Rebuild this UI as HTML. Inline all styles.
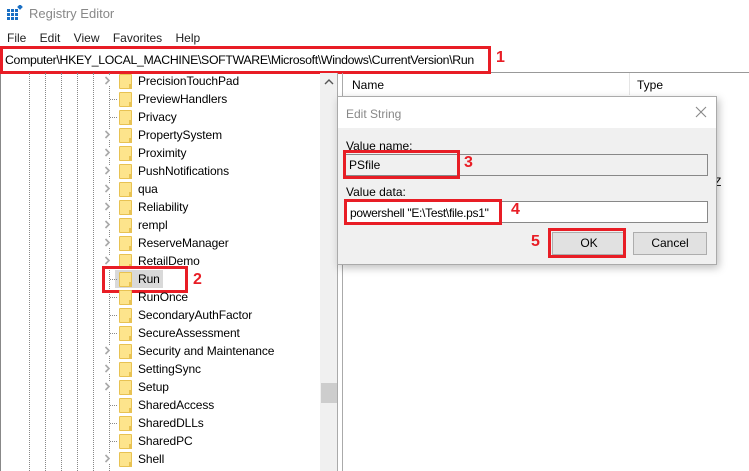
<!DOCTYPE html><html><head><style>
*{margin:0;padding:0;box-sizing:border-box}
body{width:749px;height:471px;overflow:hidden;background:#fff;font-family:"Liberation Sans",sans-serif;font-size:12px;color:#000;position:relative}
.a{position:absolute}
.row{position:absolute;left:0;height:18px;width:320px}
.fd{position:absolute;left:119px;top:2px;width:13px;height:15px;background:#fde48c;border:1px solid #e8c252;border-radius:1px}
.fd:after{content:"";position:absolute;right:-1px;bottom:-1px;width:3px;height:5px;background:#e8c252}
.tx{position:absolute;left:138px;top:2px;font-size:12px;letter-spacing:-.1px}
.ch{position:absolute;left:104px;top:4px;background:#fff}
.dt{position:absolute;left:110px;top:9px;width:7px;border-top:1px dotted #888}
.vl{position:absolute;top:73px;bottom:0;border-left:1px dotted #888}
.red{position:absolute;border:3px solid #e81d25}
.num{position:absolute;color:#e81d25;font-weight:bold;font-size:16px}
</style></head><body>
<svg class="a" style="left:7px;top:5px" width="16" height="16"><g fill="#1a6fc4"><rect x="0" y="4" width="3" height="3"/><rect x="4" y="4" width="3" height="3"/><rect x="8" y="4" width="3" height="3"/><rect x="0" y="8" width="3" height="3"/><rect x="4" y="8" width="3" height="3"/><rect x="8" y="8" width="3" height="3"/><rect x="0" y="12" width="3" height="3"/><rect x="4" y="12" width="3" height="3"/><rect x="8" y="12" width="3" height="3"/><rect x="11" y="0" width="4" height="4" transform="rotate(45 13 2)"/></g></svg>
<div class="a" style="left:29px;top:6px;font-size:13px;color:#888">Registry Editor</div>
<div class="a" style="left:7px;top:31px;font-size:12px;color:#222;word-spacing:0">File&nbsp;&nbsp;&nbsp; Edit&nbsp;&nbsp;&nbsp; View&nbsp;&nbsp;&nbsp; Favorites&nbsp;&nbsp;&nbsp; Help</div>
<div class="a" style="left:0;top:72px;width:749px;border-top:1px solid #999"></div>
<div class="a" style="left:0;top:73px;width:1px;height:398px;background:#888"></div>
<div class="a" style="left:5px;top:53px;font-size:12.3px;letter-spacing:-.32px">Computer\HKEY_LOCAL_MACHINE\SOFTWARE\Microsoft\Windows\CurrentVersion\Run</div>
<div class="red" style="left:0;top:46px;width:491px;height:28px"></div>
<div class="num" style="left:496px;top:49px">1</div>
<div class="vl" style="left:29px"></div><div class="vl" style="left:45px"></div><div class="vl" style="left:61px"></div><div class="vl" style="left:77px"></div><div class="vl" style="left:93px"></div><div class="vl" style="left:109px"></div>
<svg width="0" height="0" style="position:absolute"><defs><g id="c"><path d="M1.5 1 L5 4.5 L1.5 8" fill="none" stroke="#a8a8a8" stroke-width="1.6"/></g></defs></svg>
<div class="row" style="top:72px"><svg class="ch" width="8" height="10"><use href="#c"/></svg><div class="fd"></div><span class="tx">PrecisionTouchPad</span></div>
<div class="row" style="top:90px"><div class="dt"></div><div class="fd"></div><span class="tx">PreviewHandlers</span></div>
<div class="row" style="top:108px"><div class="dt"></div><div class="fd"></div><span class="tx">Privacy</span></div>
<div class="row" style="top:126px"><svg class="ch" width="8" height="10"><use href="#c"/></svg><div class="fd"></div><span class="tx">PropertySystem</span></div>
<div class="row" style="top:144px"><svg class="ch" width="8" height="10"><use href="#c"/></svg><div class="fd"></div><span class="tx">Proximity</span></div>
<div class="row" style="top:162px"><svg class="ch" width="8" height="10"><use href="#c"/></svg><div class="fd"></div><span class="tx">PushNotifications</span></div>
<div class="row" style="top:180px"><svg class="ch" width="8" height="10"><use href="#c"/></svg><div class="fd"></div><span class="tx">qua</span></div>
<div class="row" style="top:198px"><svg class="ch" width="8" height="10"><use href="#c"/></svg><div class="fd"></div><span class="tx">Reliability</span></div>
<div class="row" style="top:216px"><svg class="ch" width="8" height="10"><use href="#c"/></svg><div class="fd"></div><span class="tx">rempl</span></div>
<div class="row" style="top:234px"><svg class="ch" width="8" height="10"><use href="#c"/></svg><div class="fd"></div><span class="tx">ReserveManager</span></div>
<div class="row" style="top:252px"><svg class="ch" width="8" height="10"><use href="#c"/></svg><div class="fd"></div><span class="tx">RetailDemo</span></div>
<div class="a" style="left:115px;top:270px;width:48px;height:18px;background:#d9d9d9"></div>
<div class="row" style="top:270px"><div class="dt"></div><div class="fd"></div><span class="tx">Run</span></div>
<div class="red" style="left:102px;top:266px;width:86px;height:27px"></div>
<div class="num" style="left:193px;top:271px">2</div>
<div class="row" style="top:288px"><div class="dt"></div><div class="fd"></div><span class="tx">RunOnce</span></div>
<div class="row" style="top:306px"><div class="dt"></div><div class="fd"></div><span class="tx">SecondaryAuthFactor</span></div>
<div class="row" style="top:324px"><div class="dt"></div><div class="fd"></div><span class="tx">SecureAssessment</span></div>
<div class="row" style="top:342px"><svg class="ch" width="8" height="10"><use href="#c"/></svg><div class="fd"></div><span class="tx">Security and Maintenance</span></div>
<div class="row" style="top:360px"><svg class="ch" width="8" height="10"><use href="#c"/></svg><div class="fd"></div><span class="tx">SettingSync</span></div>
<div class="row" style="top:378px"><svg class="ch" width="8" height="10"><use href="#c"/></svg><div class="fd"></div><span class="tx">Setup</span></div>
<div class="row" style="top:396px"><div class="dt"></div><div class="fd"></div><span class="tx">SharedAccess</span></div>
<div class="row" style="top:414px"><div class="dt"></div><div class="fd"></div><span class="tx">SharedDLLs</span></div>
<div class="row" style="top:432px"><div class="dt"></div><div class="fd"></div><span class="tx">SharedPC</span></div>
<div class="row" style="top:450px"><svg class="ch" width="8" height="10"><use href="#c"/></svg><div class="fd"></div><span class="tx">Shell</span></div>
<div class="a" style="left:320px;top:73px;width:17px;height:398px;background:#f0f0f0"></div>
<svg class="a" style="left:324px;top:78px" width="10" height="8"><path d="M1 6 L5 2 L9 6" fill="none" stroke="#555" stroke-width="1.4"/></svg>
<div class="a" style="left:321px;top:383px;width:16px;height:20px;background:#cdcdcd"></div>
<div class="a" style="left:337px;top:73px;width:1px;height:398px;background:#aaa"></div>
<div class="a" style="left:342px;top:73px;width:1px;height:398px;background:#aaa"></div>
<div class="a" style="left:352px;top:78px">Name</div>
<div class="a" style="left:629px;top:73px;width:1px;height:22px;background:#e5e5e5"></div>
<div class="a" style="left:637px;top:78px">Type</div>
<div class="a" style="left:714px;top:175px">Z</div>
<div class="a" style="left:337px;top:96px;width:380px;height:169px;background:#f0f0f0;border:1px solid #aaa;box-shadow:2px 3px 8px rgba(0,0,0,.25)">
<div class="a" style="left:0;top:0;width:378px;height:31px;background:#fff"></div>
<div class="a" style="left:8px;top:10px;color:#888">Edit String</div>
<svg class="a" style="left:357px;top:9px" width="12" height="12"><path d="M1 1L11 11M11 1L1 11" stroke="#888" stroke-width="1.1"/></svg>
<div class="a" style="left:8px;top:42px">Value name:</div>
<div class="a" style="left:7px;top:57px;width:363px;height:22px;border:1px solid #888;background:#f0f0f0"></div>
<div class="a" style="left:11px;top:61px">PSfile</div>
<div class="a" style="left:8px;top:88px">Value data:</div>
<div class="a" style="left:7px;top:104px;width:363px;height:22px;border:1px solid #888;background:#fff"></div>
<div class="a" style="left:12px;top:109px;letter-spacing:-.3px">powershell "E:\Test\file.ps1"</div>
<div class="a" style="left:214px;top:135px;width:74px;height:23px;background:#e1e1e1;border:1px solid #adadad;text-align:center;line-height:21px">OK</div>
<div class="a" style="left:295px;top:135px;width:74px;height:23px;background:#e1e1e1;border:1px solid #adadad;text-align:center;line-height:21px">Cancel</div>
</div>
<div class="red" style="left:343px;top:150px;width:117px;height:29px"></div>
<div class="num" style="left:464px;top:154px">3</div>
<div class="red" style="left:344px;top:199px;width:158px;height:26px"></div>
<div class="num" style="left:511px;top:201px">4</div>
<div class="red" style="left:548px;top:228px;width:78px;height:30px"></div>
<div class="num" style="left:531px;top:233px">5</div>
</body></html>
